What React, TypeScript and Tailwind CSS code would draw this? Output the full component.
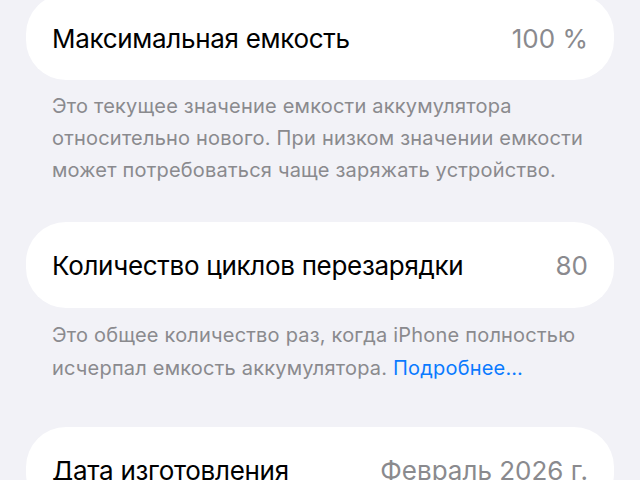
export default function App() {
  return (
    <div
      className="h-[480px] w-[640px] overflow-hidden bg-[#f2f2f7] px-[26px] text-black"
      style={{ fontFamily: "Inter, 'Noto Sans', sans-serif" }}
    >
      <div className="-mt-[6px] flex h-[86px] items-center justify-between rounded-[40px] bg-white px-[26px] pt-[2px]">
        <span className="text-[26px] tracking-[-0.3px]">Максимальная емкость</span>
        <span className="text-[26px] text-[#8a8a8e]">100 %</span>
      </div>
      <p className="mt-[10px] px-[26px] text-[20px] leading-[32px] tracking-[0.2px] text-[#8a8a8e]">
        Это текущее значение емкости аккумулятора относительно нового. При низком значении
        емкости может потребоваться чаще заряжать устройство.
      </p>

      <div className="mt-[36px] flex h-[86px] items-center justify-between rounded-[40px] bg-white px-[26px]">
        <span className="text-[26px] tracking-[-0.3px]">Количество циклов перезарядки</span>
        <span className="text-[26px] text-[#8a8a8e]">80</span>
      </div>
      <p className="mt-[11px] px-[26px] text-[20px] leading-[33px] tracking-[0.2px] text-[#8a8a8e]">
        Это общее количество раз, когда iPhone полностью исчерпал емкость аккумулятора.{" "}
        <span className="text-[#0a7aff]">Подробнее…</span>
      </p>

      <div className="mt-[42px] flex h-[86px] items-center justify-between rounded-[40px] bg-white px-[26px]">
        <span className="text-[26px] tracking-[-0.3px]">Дата изготовления</span>
        <span className="text-[26px] text-[#8a8a8e]">Февраль 2026 г.</span>
      </div>
    </div>
  );
}
